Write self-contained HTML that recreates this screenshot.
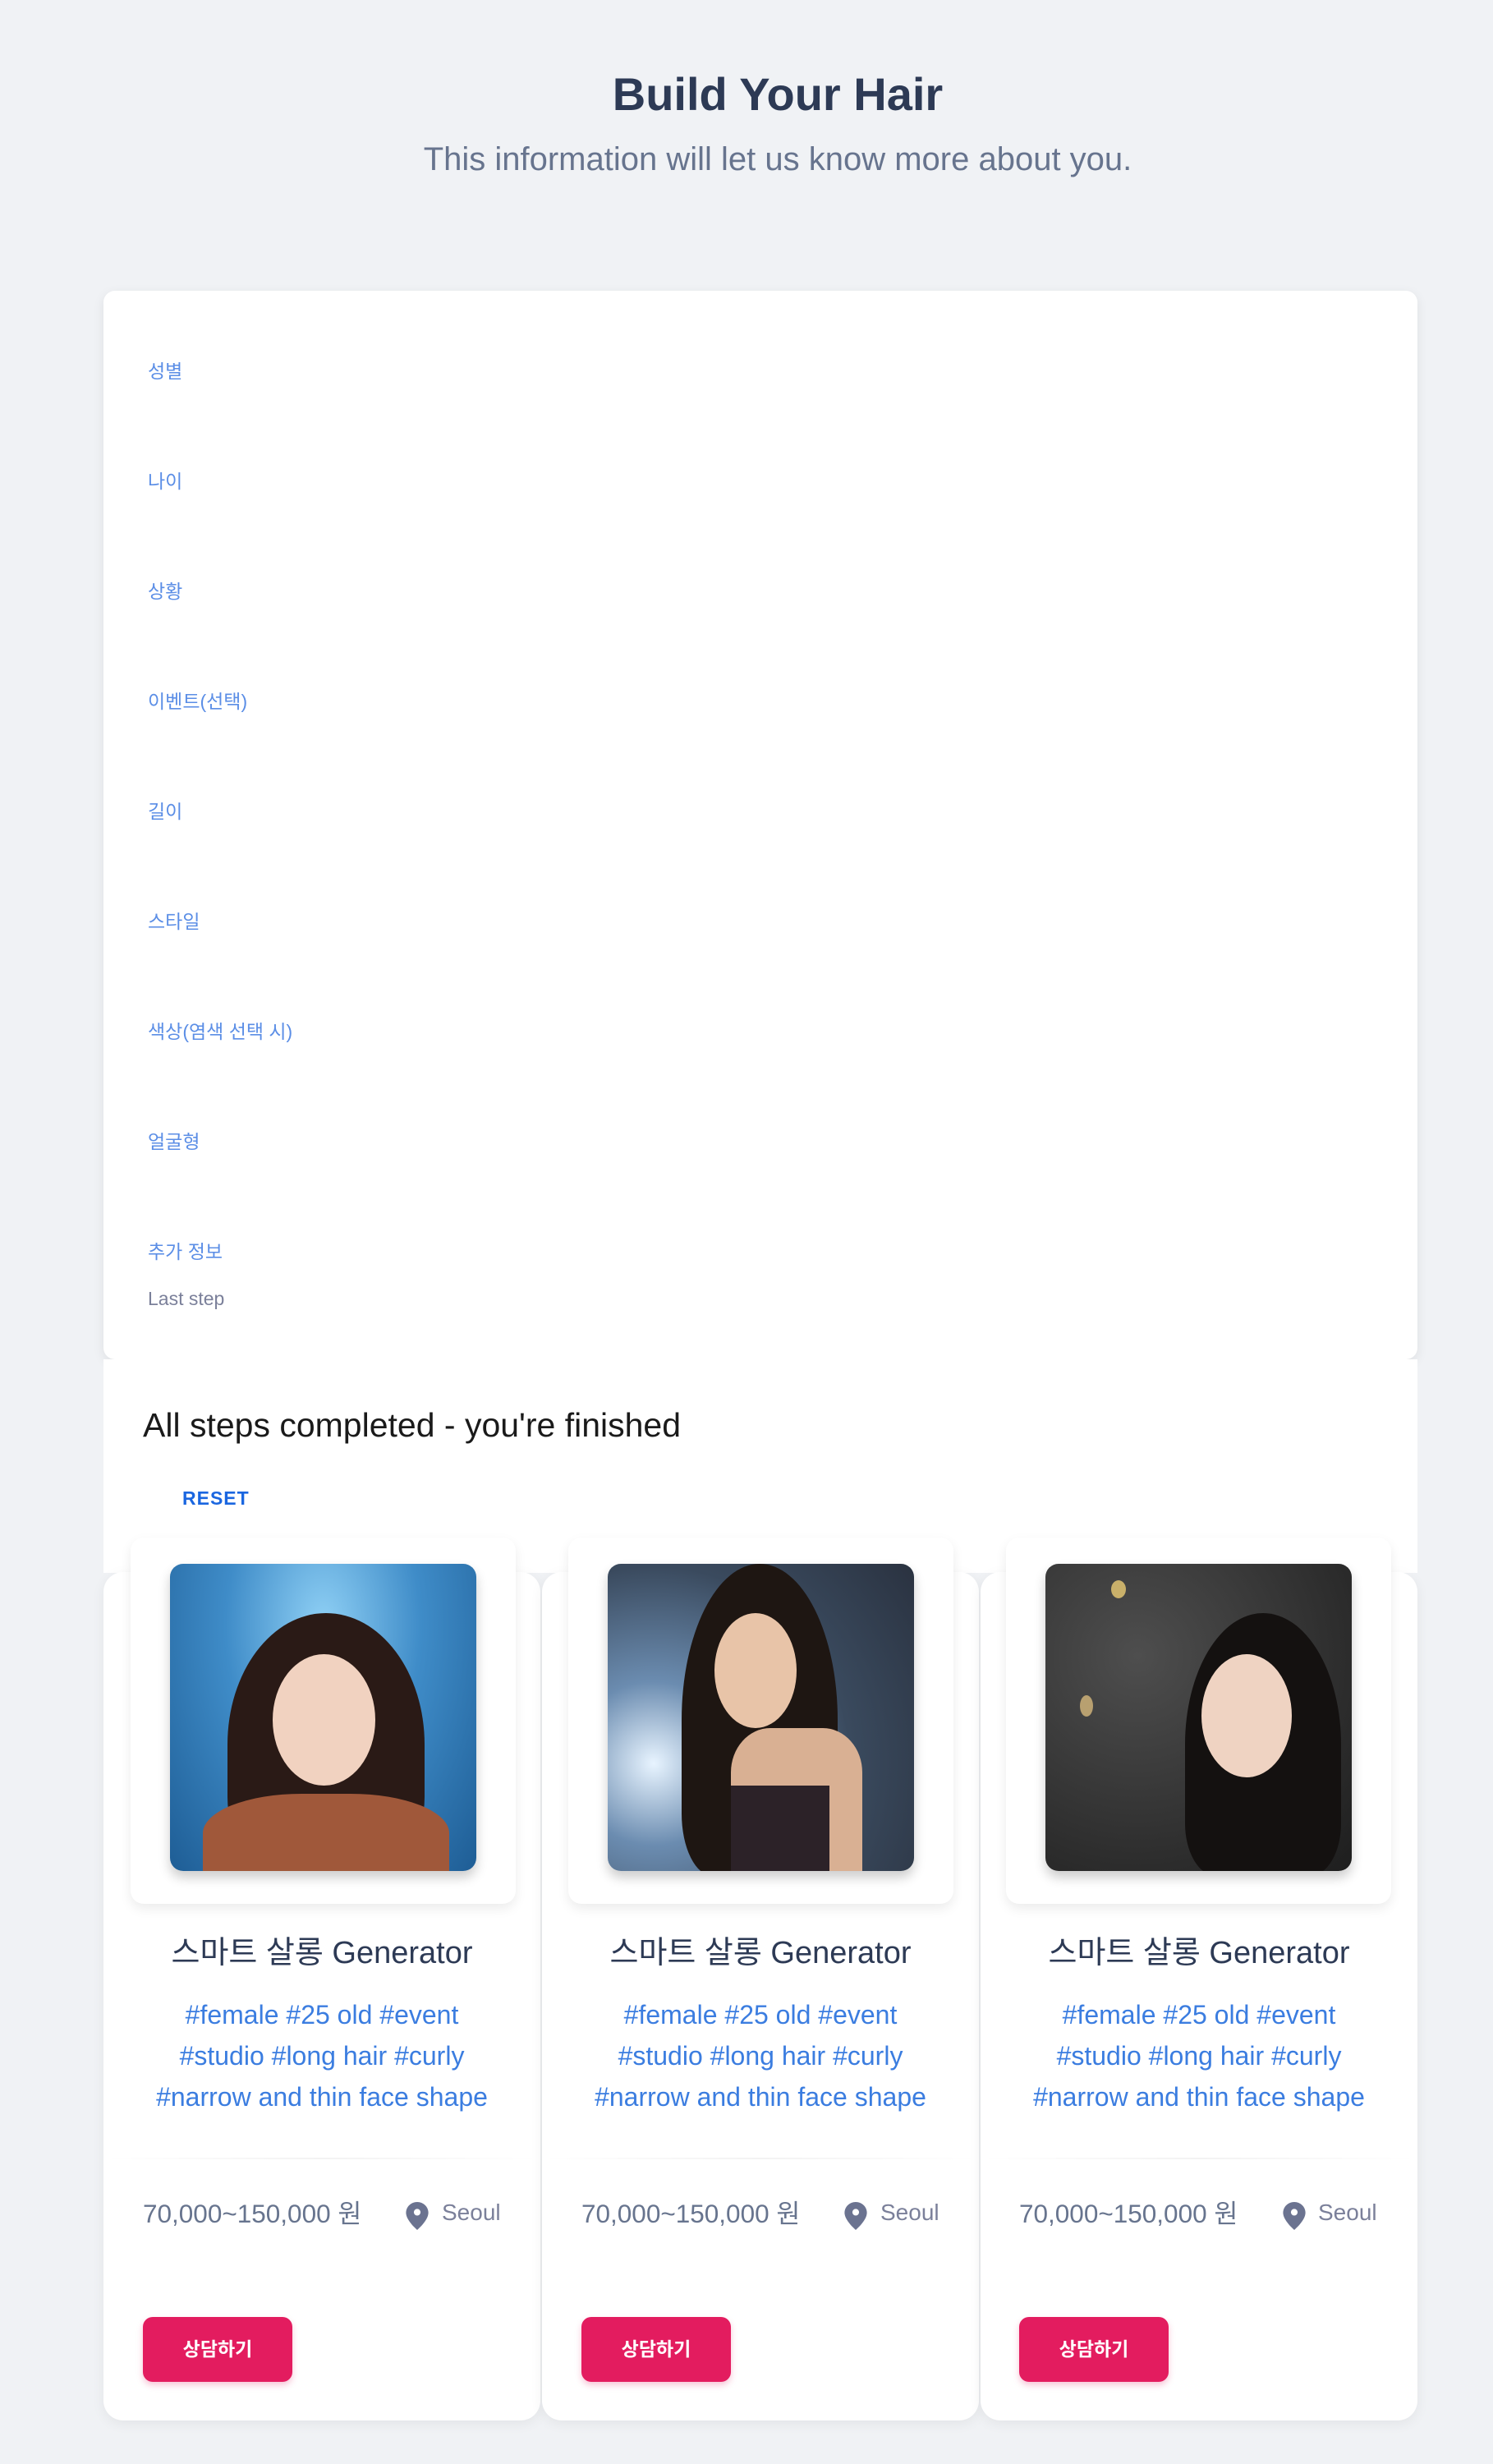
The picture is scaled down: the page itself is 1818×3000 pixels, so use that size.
<!DOCTYPE html>
<html><head><meta charset="utf-8"><style>
*{margin:0;padding:0;box-sizing:border-box}
body{width:1818px;height:3000px;background:#f0f2f5;font-family:"Liberation Sans","Noto Sans CJK KR",sans-serif;position:relative;overflow:hidden}
.abs{position:absolute}
h1{position:absolute;top:82px;left:38px;width:1818px;text-align:center;font-size:56px;font-weight:bold;color:#2d3a55}
.sub{top:172px;left:38px;width:1818px;text-align:center;font-size:40px;color:#67748e}
.top{left:126px;top:354px;width:1600px;height:1301px;background:#fff;border-radius:14px;box-shadow:0 4px 14px rgba(0,0,0,.08)}
.lbl{left:180px;font-size:23px;color:#5b8ee6}
.done{left:126px;top:1655px;width:1600px;height:260px;background:#fff}
.card{top:1914px;width:532px;height:1033px;background:#fff;border-radius:24px;box-shadow:0 4px 16px rgba(0,0,0,.06)}
.ph{top:1872px;width:469px;height:446px;background:#fff;border-radius:16px;box-shadow:0 6px 14px rgba(0,0,0,.08)}
.img{top:1904px;width:373px;height:374px;border-radius:16px;overflow:hidden;box-shadow:0 8px 14px rgba(0,0,0,.2)}
.t{top:2346px;width:532px;text-align:center;font-size:38px;color:#2d3a55}
.tags{top:2428px;width:532px;text-align:center;font-size:32px;line-height:50px;color:#3b7de0}
.div{top:2627px;width:532px;height:2px;background:linear-gradient(90deg,rgba(0,0,0,0),rgba(0,0,0,.05),rgba(0,0,0,0))}
.price{top:2670px;font-size:31.5px;color:#67748e}
.loc{top:2678px;font-size:28px;color:#7b809a}
.btn{top:2821px;width:182px;height:79px;background:#e31c5f;border-radius:12px;color:#fff;font-weight:bold;font-size:23px;text-align:center;line-height:79px;box-shadow:0 4px 8px rgba(227,28,95,.25)}
</style></head><body>
<h1>Build Your Hair</h1>
<div class="abs sub">This information will let us know more about you.</div>
<div class="abs top"></div>
<div class="abs lbl" style="top:433px">성별</div>
<div class="abs lbl" style="top:567px">나이</div>
<div class="abs lbl" style="top:701px">상황</div>
<div class="abs lbl" style="top:835px">이벤트(선택)</div>
<div class="abs lbl" style="top:969px">길이</div>
<div class="abs lbl" style="top:1103px">스타일</div>
<div class="abs lbl" style="top:1237px">색상(염색 선택 시)</div>
<div class="abs lbl" style="top:1371px">얼굴형</div>
<div class="abs lbl" style="top:1505px">추가 정보</div>
<div class="abs" style="left:180px;top:1568px;font-size:23px;color:#7b809a">Last step</div>
<div class="abs done"></div>
<div class="abs" style="left:174px;top:1712px;font-size:41px;color:#1a1a1a">All steps completed - you're finished</div>
<div class="abs" style="left:222px;top:1811px;font-size:23px;font-weight:bold;color:#1a66e0;letter-spacing:1px">RESET</div>

<div class="abs card" style="left:126px"></div>
<div class="abs card" style="left:660px"></div>
<div class="abs card" style="left:1194px"></div>

<div class="abs ph" style="left:159px"></div>
<div class="abs ph" style="left:692px"></div>
<div class="abs ph" style="left:1225px"></div>

<div class="abs img" style="left:207px;background:radial-gradient(ellipse at 50% 20%,#8fd0f5,#3f8cc8 45%,#1e5d95)">
<div class="abs" style="left:70px;top:60px;width:240px;height:320px;border-radius:50% 50% 30% 30%;background:#2a1a16"></div>
<div class="abs" style="left:125px;top:110px;width:125px;height:160px;border-radius:50%;background:#f1d2c0"></div>
<div class="abs" style="left:40px;top:280px;width:300px;height:120px;border-radius:40% 40% 0 0;background:#a0583a"></div>
</div>
<div class="abs img" style="left:740px;background:radial-gradient(circle at 15% 65%,#e8f4ff,#6b8cb0 25%,#3a4a5e 60%,#2a3240)">
<div class="abs" style="left:90px;top:0;width:190px;height:380px;border-radius:50% 50% 20% 20%;background:#1e1612"></div>
<div class="abs" style="left:130px;top:60px;width:100px;height:140px;border-radius:50%;background:#e8c4a8"></div>
<div class="abs" style="left:150px;top:200px;width:160px;height:180px;border-radius:30% 30% 0 0;background:#d9b093"></div>
<div class="abs" style="left:150px;top:270px;width:120px;height:110px;background:#2c2228"></div>
</div>
<div class="abs img" style="left:1273px;background:radial-gradient(ellipse at 30% 30%,#4e4e4e,#2c2c2c 70%,#1e1e1e)">
<div class="abs" style="left:170px;top:60px;width:190px;height:320px;border-radius:50% 50% 20% 20%;background:#141110"></div>
<div class="abs" style="left:190px;top:110px;width:110px;height:150px;border-radius:50%;background:#efd3c2"></div>
<div class="abs" style="left:80px;top:20px;width:18px;height:22px;border-radius:50%;background:#c9b06a"></div>
<div class="abs" style="left:42px;top:160px;width:16px;height:26px;border-radius:50%;background:#b8a070"></div>
</div>

<div class="abs t" style="left:126px">스마트 살롱 Generator</div>
<div class="abs t" style="left:660px">스마트 살롱 Generator</div>
<div class="abs t" style="left:1194px">스마트 살롱 Generator</div>

<div class="abs tags" style="left:126px">#female #25 old #event<br>#studio #long hair #curly<br>#narrow and thin face shape</div>
<div class="abs tags" style="left:660px">#female #25 old #event<br>#studio #long hair #curly<br>#narrow and thin face shape</div>
<div class="abs tags" style="left:1194px">#female #25 old #event<br>#studio #long hair #curly<br>#narrow and thin face shape</div>

<div class="abs div" style="left:126px"></div>
<div class="abs div" style="left:660px"></div>
<div class="abs div" style="left:1194px"></div>

<div class="abs price" style="left:174px">70,000~150,000 원</div>
<div class="abs price" style="left:708px">70,000~150,000 원</div>
<div class="abs price" style="left:1241px">70,000~150,000 원</div>

<svg class="abs" style="left:494px;top:2681px" width="28" height="34" viewBox="0 0 24 30"><path d="M12 0C5.4 0 0 5.2 0 11.6 0 20 12 30 12 30s12-10 12-18.4C24 5.2 18.6 0 12 0z" fill="#6b7390"/><circle cx="12" cy="11" r="3.6" fill="#fff"/></svg>
<svg class="abs" style="left:1028px;top:2681px" width="28" height="34" viewBox="0 0 24 30"><path d="M12 0C5.4 0 0 5.2 0 11.6 0 20 12 30 12 30s12-10 12-18.4C24 5.2 18.6 0 12 0z" fill="#6b7390"/><circle cx="12" cy="11" r="3.6" fill="#fff"/></svg>
<svg class="abs" style="left:1562px;top:2681px" width="28" height="34" viewBox="0 0 24 30"><path d="M12 0C5.4 0 0 5.2 0 11.6 0 20 12 30 12 30s12-10 12-18.4C24 5.2 18.6 0 12 0z" fill="#6b7390"/><circle cx="12" cy="11" r="3.6" fill="#fff"/></svg>
<div class="abs loc" style="left:538px">Seoul</div>
<div class="abs loc" style="left:1072px">Seoul</div>
<div class="abs loc" style="left:1605px">Seoul</div>

<div class="abs btn" style="left:174px">상담하기</div>
<div class="abs btn" style="left:708px">상담하기</div>
<div class="abs btn" style="left:1241px">상담하기</div>
</body></html>
